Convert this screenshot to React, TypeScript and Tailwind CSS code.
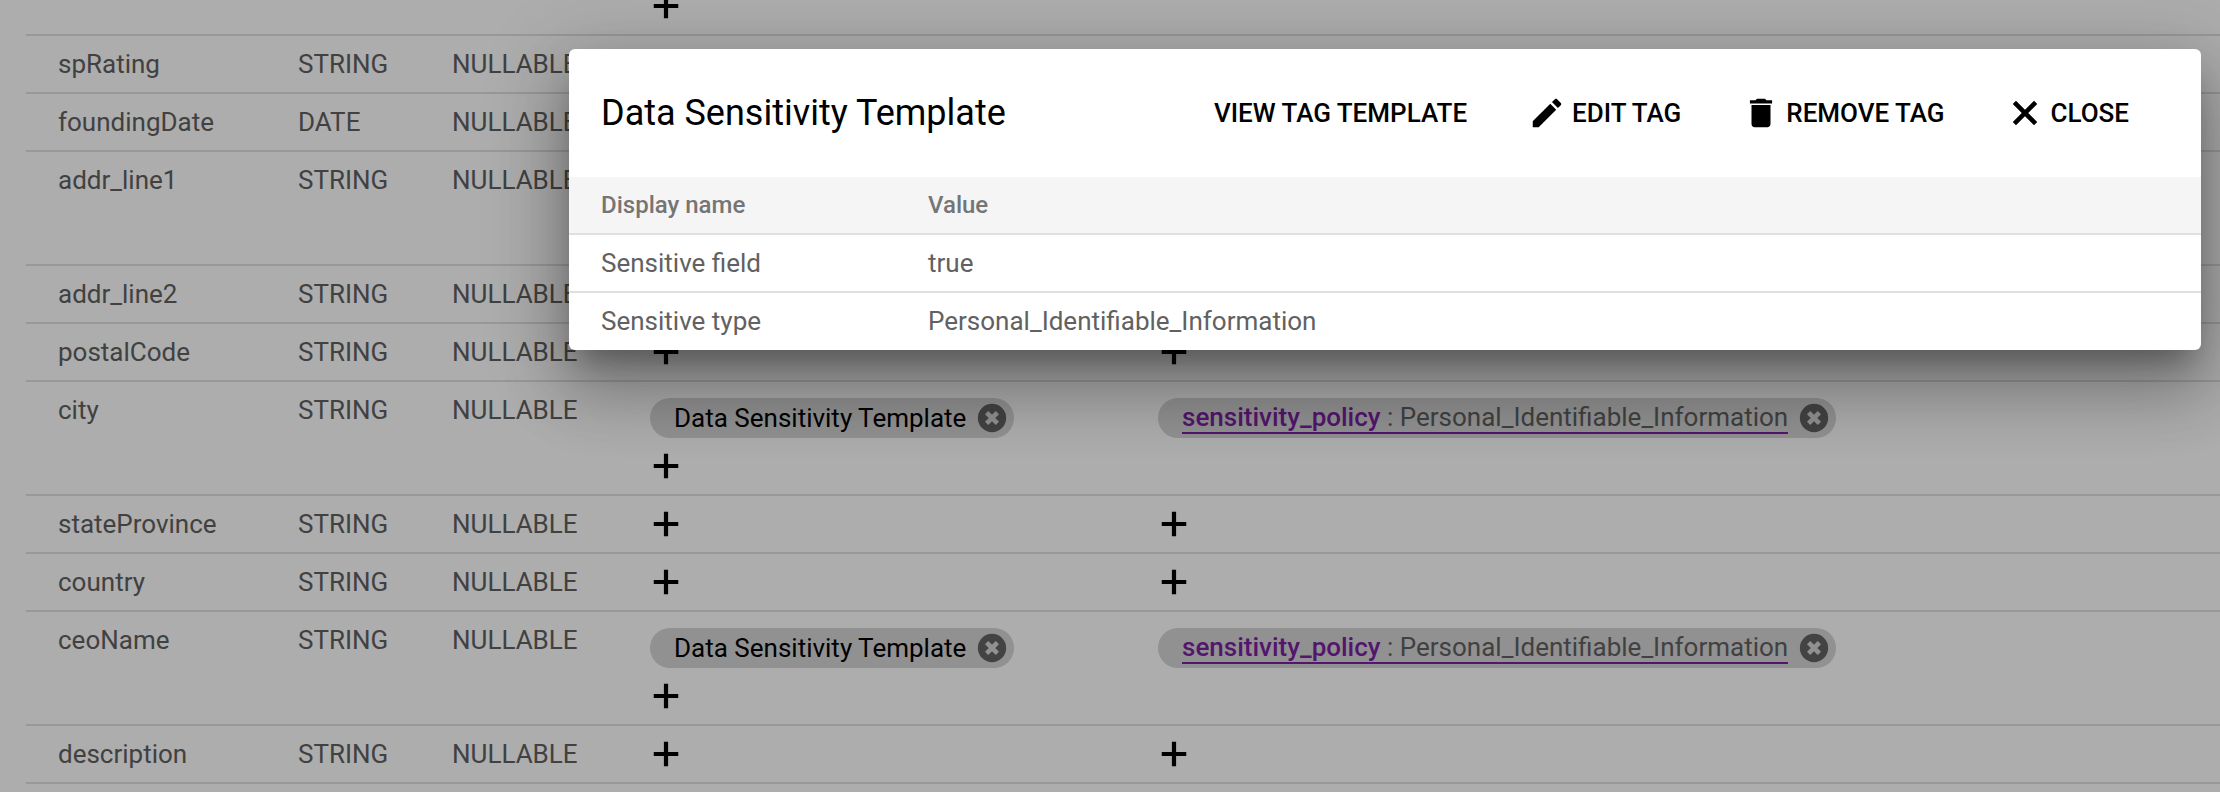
type ColumnRow = {
  name: string;
  type: string;
  tagged?: boolean;
};

const rows: ColumnRow[] = [
  { name: "ticker", type: "STRING", tagged: true },
  { name: "spRating", type: "STRING" },
  { name: "foundingDate", type: "DATE" },
  { name: "addr_line1", type: "STRING", tagged: true },
  { name: "addr_line2", type: "STRING" },
  { name: "postalCode", type: "STRING" },
  { name: "city", type: "STRING", tagged: true },
  { name: "stateProvince", type: "STRING" },
  { name: "country", type: "STRING" },
  { name: "ceoName", type: "STRING", tagged: true },
  { name: "description", type: "STRING" },
  { name: "website", type: "STRING" },
];

const Icon = ({ d, className }: { d: string; className: string }) => (
  <svg viewBox="0 0 24 24" fill="currentColor" className={className}>
    <path d={d} />
  </svg>
);

const ADD = "M19 13.2h-5.8V19h-2.4v-5.8H5v-2.4h5.8V5h2.4v5.8H19z";
const EDIT =
  "M3 17.25V21h3.75L17.81 9.94l-3.75-3.75L3 17.25zM20.71 7.04c.39-.39.39-1.02 0-1.41l-2.34-2.34c-.39-.39-1.02-.39-1.41 0l-1.83 1.83 3.75 3.75 1.83-1.83z";
const DELETE =
  "M6 19c0 1.1.9 2 2 2h8c1.1 0 2-.9 2-2V7H6v12zM19 4h-3.5l-1-1h-5l-1 1H5v2h14V4z";
const CLOSE =
  "M19 6.84L17.16 5 12 10.16 6.84 5 5 6.84 10.16 12 5 17.16 6.84 19 12 13.84 17.16 19 19 17.16 13.84 12z";

const AddButton = () => (
  <Icon d={ADD} className="block w-[42px] h-[42px] -ml-[5px] -my-[2px] text-black" />
);

const ChipDelete = () => (
  <svg viewBox="0 0 24 24" className="w-[34px] h-[34px] ml-[9px] shrink-0">
    <circle cx="12" cy="12" r="10" fill="#646464" />
    <path d="M8.2 8.2l7.6 7.6M15.8 8.2l-7.6 7.6" stroke="#d6d6d6" strokeWidth="3.2" fill="none" />
  </svg>
);

const PolicyChip = () => (
  <div className="inline-flex items-center h-[40px] w-[364px] pl-[24px] rounded-full bg-[#d6d6d6] text-[26px] text-black">
    <span className="whitespace-nowrap">Data Sensitivity Template</span>
    <ChipDelete />
  </div>
);

const TagChip = () => (
  <div className="inline-flex items-center h-[40px] w-[678px] pl-[24px] rounded-full bg-[#d6d6d6] text-[26px]">
    <span className="whitespace-nowrap leading-[30px] border-b-2 border-[#7b1fa2] text-[#616161]">
      <span className="font-medium text-[#7b1fa2]">sensitivity_policy </span>: Personal_Identifiable_Information
    </span>
    <ChipDelete />
  </div>
);

const TableRow = ({ row }: { row: ColumnRow }) => (
  <div className="flex border-b-2 border-[#e0e0e0] text-[26px] text-[#616161]">
    <div className="w-[272px] pl-[32px] pt-[15px] leading-[26px]">{row.name}</div>
    <div className="w-[154px] pt-[15px] leading-[26px]">{row.type}</div>
    <div className="w-[198px] pt-[15px] leading-[26px]">NULLABLE</div>
    {row.tagged ? (
      <>
        <div className="w-[508px] pt-[16px] pb-[9px]">
          <PolicyChip />
          <div className="mt-[9px]">
            <AddButton />
          </div>
        </div>
        <div className="pt-[16px]">
          <TagChip />
        </div>
      </>
    ) : (
      <>
        <div className="w-[508px] pt-[9px] pb-[9px]">
          <AddButton />
        </div>
        <div className="pt-[9px]">
          <AddButton />
        </div>
      </>
    )}
  </div>
);

const ModalAction = ({ icon, iconClass, label }: { icon?: string; iconClass?: string; label: string }) => (
  <button type="button" className="flex items-center gap-[6px] text-[26px] font-medium text-black whitespace-nowrap">
    {icon && <Icon d={icon} className={iconClass ?? "w-[38px] h-[38px]"} />}
    {label}
  </button>
);

const TagModal = () => (
  <div className="absolute left-[569px] top-[49px] w-[1632px] h-[301px] rounded-[6px] bg-white overflow-hidden shadow-[0_20px_28px_-11px_rgba(0,0,0,0.3),0_40px_64px_6px_rgba(0,0,0,0.2),0_16px_80px_14px_rgba(0,0,0,0.16)]">
    <div className="flex items-center justify-between h-[128px] pl-[32px] pr-[72px]">
      <h2 className="text-[36px] font-normal text-black">Data Sensitivity Template</h2>
      <div className="flex items-center gap-[61px]">
        <ModalAction label="VIEW TAG TEMPLATE" />
        <ModalAction icon={EDIT} label="EDIT TAG" />
        <ModalAction icon={DELETE} label="REMOVE TAG" />
        <ModalAction icon={CLOSE} iconClass="w-[42px] h-[42px] -ml-[1px] -mr-[2px]" label="CLOSE" />
      </div>
    </div>
    <div className="flex h-[58px] items-center bg-[#f5f5f5] border-b-2 border-[#e0e0e0] text-[24px] font-medium text-[#757575]">
      <div className="w-[359px] pl-[32px]">Display name</div>
      <div>Value</div>
    </div>
    <div className="flex h-[58px] items-center border-b-2 border-[#e0e0e0] text-[26px] text-[#616161]">
      <div className="w-[359px] pl-[32px]">Sensitive field</div>
      <div>true</div>
    </div>
    <div className="flex h-[57px] items-center text-[26px] text-[#616161]">
      <div className="w-[359px] pl-[32px]">Sensitive type</div>
      <div>Personal_Identifiable_Information</div>
    </div>
  </div>
);

export default function App() {
  return (
    <div className="relative h-[792px] overflow-hidden bg-white font-['Roboto',sans-serif]">
      <div className="-mt-[78px] ml-[26px]">
        {rows.map((row) => (
          <TableRow key={row.name} row={row} />
        ))}
      </div>
      <div className="absolute inset-0 bg-black/32" />
      <TagModal />
    </div>
  );
}
